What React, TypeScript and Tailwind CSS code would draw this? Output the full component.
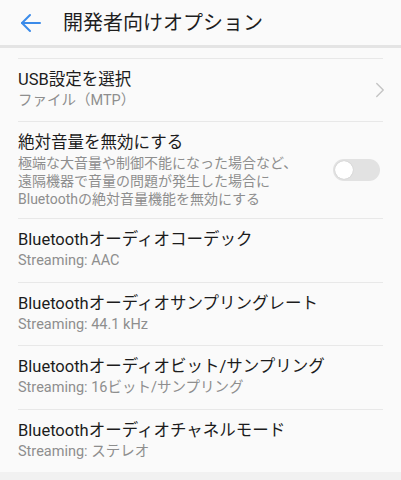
import { ChevronRight } from "lucide-react";

interface Row {
  title: string;
  sub: string;
}

const bluetoothRows: Row[] = [
  { title: "Bluetoothオーディオコーデック", sub: "Streaming: AAC" },
  { title: "Bluetoothオーディオサンプリングレート", sub: "Streaming: 44.1 kHz" },
  { title: "Bluetoothオーディオビット/サンプリング", sub: "Streaming: 16ビット/サンプリング" },
  { title: "Bluetoothオーディオチャネルモード", sub: "Streaming: ステレオ" },
];

function BackArrow() {
  return (
    <svg width="22" height="20" viewBox="0 0 22 20" fill="none" stroke="#3b8be9" strokeWidth="2" strokeLinecap="round" strokeLinejoin="round">
      <path d="M20 10H2" />
      <path d="M10 2L2 10l8 8" />
    </svg>
  );
}

function Toggle() {
  return (
    <div className="w-[47px] h-[22px] rounded-full bg-[#e2e2e2] flex items-center px-[2px] shrink-0">
      <div className="w-[18px] h-[18px] rounded-full bg-white shadow-[0_0_1px_rgba(0,0,0,0.25)]" />
    </div>
  );
}

export default function App() {
  return (
    <div
      className="w-[401px] h-[480px] bg-[#fafafa] flex flex-col overflow-hidden"
      style={{ fontFamily: 'Roboto, "Noto Sans CJK JP", sans-serif' }}
    >
      {/* Header */}
      <div className="h-[45px] flex items-center pl-[20px] shrink-0">
        <BackArrow />
        <span className="ml-[21px] text-[20px] text-[#1e1e1e] leading-none">開発者向けオプション</span>
      </div>
      <div className="h-[3px] bg-[#e4e4e4] shrink-0" />
      <div className="h-[10px] shrink-0" />

      {/* List */}
      <div className="mx-[18px] border-t border-[#e8e8e8]">
        <div className="h-[63px] flex items-center border-b border-[#e8e8e8]">
          <div className="flex-1">
            <div className="text-[16.5px] leading-[22px] text-[#1c1c1c]">USB設定を選択</div>
            <div className="text-[14.5px] leading-[20px] text-[#8e8e8e]">ファイル（MTP）</div>
          </div>
          <ChevronRight className="w-[26px] h-[26px] text-[#c4c4c4] -mr-[10px]" strokeWidth={1.3} />
        </div>

        <div className="h-[97px] flex items-center border-b border-[#e8e8e8]">
          <div className="flex-1">
            <div className="text-[16.5px] leading-[22px] text-[#1c1c1c]">絶対音量を無効にする</div>
            <div className="text-[14px] leading-[18px] text-[#8e8e8e]">
              <div>極端な大音量や制御不能になった場合など、</div>
              <div>遠隔機器で音量の問題が発生した場合に</div>
              <div>Bluetoothの絶対音量機能を無効にする</div>
            </div>
          </div>
          <div className="mr-[3px]">
            <Toggle />
          </div>
        </div>

        {bluetoothRows.map((row, i) => (
          <div
            key={row.title}
            className={
              i < bluetoothRows.length - 1
                ? "h-[63.5px] flex flex-col justify-center border-b border-[#e8e8e8]"
                : "h-[62px] flex flex-col justify-center"
            }
          >
            <div className="text-[16.5px] leading-[22px] text-[#1c1c1c]">{row.title}</div>
            <div className="text-[14.5px] leading-[20px] text-[#8e8e8e]">{row.sub}</div>
          </div>
        ))}
      </div>

      <div className="flex-1 bg-[#f1f1f1]" />
    </div>
  );
}
